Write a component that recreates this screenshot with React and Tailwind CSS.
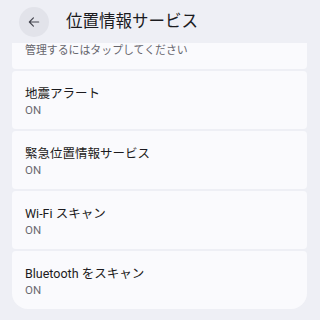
import React from "react";

// -------------------------------------

const items = [
    { title: "地震アラート", sub: "ON" },
    { title: "緊急位置情報サービス", sub: "ON" },
    { title: "Wi-Fi スキャン", sub: "ON" },
    { title: "Bluetooth をスキャン", sub: "ON" },
];

const font = { fontFamily: 'Roboto, "Noto Sans CJK JP", sans-serif' };

const Row = ({ title, sub, last }) => (
    <div
        className={`h-[58px] bg-[#fafafd] px-[13px] pt-[15px] ${
            last ? "rounded-t-[4px] rounded-b-[16px]" : "rounded-[4px]"
        }`}
    >
        <div className="text-[12.5px] leading-[16px] text-[#1c1b20]">{title}</div>
        <div className="text-[11.5px] leading-[14px] text-[#6a696f] mt-[1px]">{sub}</div>
    </div>
);

const App = () => {
    return (
        <div className="w-[320px] h-[320px] bg-[#eeeff5] overflow-hidden flex flex-col" style={font}>
            {/* Header */}
            <div className="h-[43px] flex items-center shrink-0">
                <div className="ml-[19px] w-[30px] h-[30px] rounded-full bg-[#e2e3ea] flex items-center justify-center">
                    <svg width="14" height="14" viewBox="0 0 24 24" fill="none">
                        <path
                            d="M20 12H5M11 5l-7 7 7 7"
                            stroke="#45464f"
                            strokeWidth="2"
                            strokeLinecap="round"
                            strokeLinejoin="round"
                        />
                    </svg>
                </div>
                <h1 className="ml-[17px] text-[16.5px] text-[#1b1b1f] mt-[1px]">位置情報サービス</h1>
            </div>

            {/* List (scrolled) */}
            <div className="mx-[12px] w-[295px] flex flex-col gap-[2px]">
                <div className="h-[26px] bg-[#fafafd] px-[13px] pt-[1px] rounded-b-[4px]">
                    <div className="text-[10.9px] leading-[14px] text-[#67666d]">管理するにはタップしてください</div>
                </div>
                {items.map((it, i) => (
                    <Row key={i} title={it.title} sub={it.sub} last={i === items.length - 1} />
                ))}
            </div>
        </div>
    );
};

export default App;
